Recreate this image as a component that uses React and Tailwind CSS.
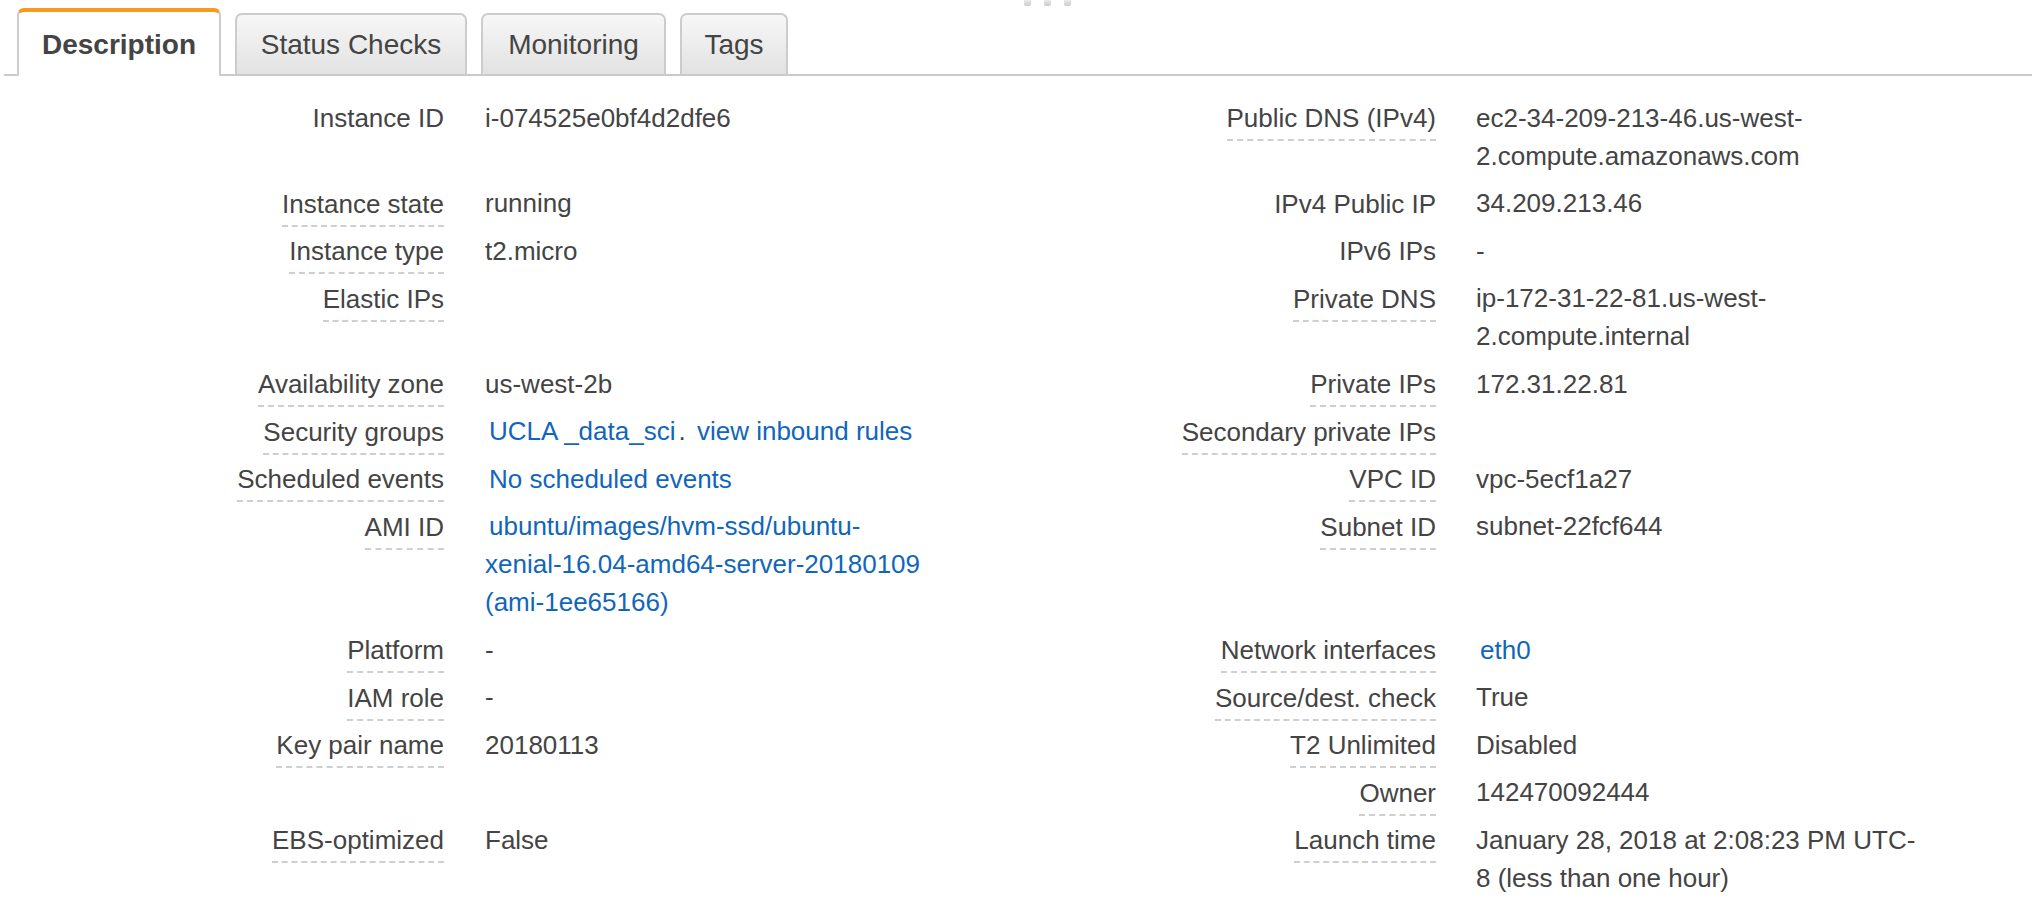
import React from 'react';

const tabs = [
  { name: 'Description', active: true, width: 'w-[204px]' },
  { name: 'Status Checks', width: 'w-[232px]' },
  { name: 'Monitoring', width: 'w-[185px]' },
  { name: 'Tags', width: 'w-[108px]' },
];

function Link({ children, first = true }) {
  return (
    <a href="#" className={`text-[#1166bb] no-underline ${first ? 'ml-[4px]' : ''}`}>
      {children}
    </a>
  );
}

// each row: left label, left value, right label, right value ; dashed = underline on label
const rows = [
  {
    l: 'Instance ID', lDash: false, lv: 'i-074525e0bf4d2dfe6',
    r: 'Public DNS (IPv4)', rDash: true,
    rv: <>ec2-34-209-213-46.us-west-<wbr />2.compute.amazonaws.com</>,
  },
  { l: 'Instance state', lDash: true, lv: 'running', r: 'IPv4 Public IP', rDash: false, rv: '34.209.213.46' },
  { l: 'Instance type', lDash: true, lv: 't2.micro', r: 'IPv6 IPs', rDash: false, rv: '-' },
  {
    l: 'Elastic IPs', lDash: true, lv: '',
    r: 'Private DNS', rDash: true,
    rv: <>ip-172-31-22-81.us-west-<wbr />2.compute.internal</>,
  },
  { l: 'Availability zone', lDash: true, lv: 'us-west-2b', r: 'Private IPs', rDash: true, rv: '172.31.22.81' },
  {
    l: 'Security groups', lDash: true,
    lv: (
      <>
        <Link>UCLA _data_sci</Link>
        <span className="ml-[3px]">.</span> <Link>view inbound rules</Link>
      </>
    ),
    r: 'Secondary private IPs', rDash: true, rv: '',
  },
  { l: 'Scheduled events', lDash: true, lv: <Link>No scheduled events</Link>, r: 'VPC ID', rDash: true, rv: 'vpc-5ecf1a27' },
  {
    l: 'AMI ID', lDash: true,
    lv: (
      <Link>
        ubuntu/images/hvm-ssd/ubuntu-
        <br />
        xenial-16.04-amd64-server-20180109
        <br />
        (ami-1ee65166)
      </Link>
    ),
    r: 'Subnet ID', rDash: true, rv: 'subnet-22fcf644',
  },
  { l: 'Platform', lDash: true, lv: '-', r: 'Network interfaces', rDash: true, rv: <Link>eth0</Link> },
  { l: 'IAM role', lDash: true, lv: '-', r: 'Source/dest. check', rDash: true, rv: 'True' },
  { l: 'Key pair name', lDash: true, lv: '20180113', r: 'T2 Unlimited', rDash: true, rv: 'Disabled' },
  { l: '', lDash: false, lv: '', r: 'Owner', rDash: true, rv: '142470092444' },
  {
    l: 'EBS-optimized', lDash: true, lv: 'False',
    r: 'Launch time', rDash: true,
    rv: <>January 28, 2018 at 2:08:23 PM UTC-<wbr />8 (less than one hour)</>,
  },
];

function Label({ text, dashed }) {
  return (
    <div className="flex items-start justify-end pt-[9px]">
      {text && (
        <div
          className={`leading-[30px] pb-[6px] border-b-2 border-dashed ${
            dashed ? 'border-[#cfcfcf]' : 'border-transparent'
          }`}
        >
          {text}
        </div>
      )}
    </div>
  );
}

export default function App() {
  return (
    <div className="relative min-h-screen bg-white text-[#444] font-['Liberation_Sans',Arial,sans-serif] overflow-hidden">
      {/* split pane grip */}
      <div className="absolute top-0 left-[1024px] flex gap-[13px]">
        <div className="w-[7px] h-[6px] rounded-b-[2px] bg-gradient-to-b from-[#ececec] to-[#c9c9c9]" />
        <div className="w-[7px] h-[6px] rounded-b-[2px] bg-gradient-to-b from-[#ececec] to-[#c9c9c9]" />
        <div className="w-[7px] h-[6px] rounded-b-[2px] bg-gradient-to-b from-[#ececec] to-[#c9c9c9]" />
      </div>

      {/* Tabs */}
      <div className="flex items-end gap-[14px] h-[76px] ml-[4px] pl-[13px] border-b-2 border-[#cacaca] text-[28px]">
        {tabs.map((t) =>
          t.active ? (
            <div
              key={t.name}
              className={`${t.width} h-[68px] -mb-[2px] flex items-center justify-center pt-[2px] bg-white border-2 border-b-0 border-[#cccccc] border-t-4 border-t-[#f7991c] rounded-t-[7px] font-bold`}
            >
              {t.name}
            </div>
          ) : (
            <div
              key={t.name}
              className={`${t.width} h-[61px] flex items-center justify-center bg-gradient-to-b from-[#f7f7f7] to-[#e2e2e2] border-2 border-b-0 border-[#cccccc] rounded-t-[7px]`}
            >
              {t.name}
            </div>
          )
        )}
      </div>

      {/* Description table */}
      <div className="grid grid-cols-[444px_506px_486px_488px] pt-[18px] text-[26px]">
        {rows.map((row, i) => (
          <React.Fragment key={i}>
            <Label text={row.l} dashed={row.lDash} />
            <div className="pl-[41px] py-[4.75px] leading-[38px]">{row.lv}</div>
            <Label text={row.r} dashed={row.rDash} />
            <div className="pl-[40px] py-[4.75px] leading-[38px]">{row.rv}</div>
          </React.Fragment>
        ))}
      </div>
    </div>
  );
}
